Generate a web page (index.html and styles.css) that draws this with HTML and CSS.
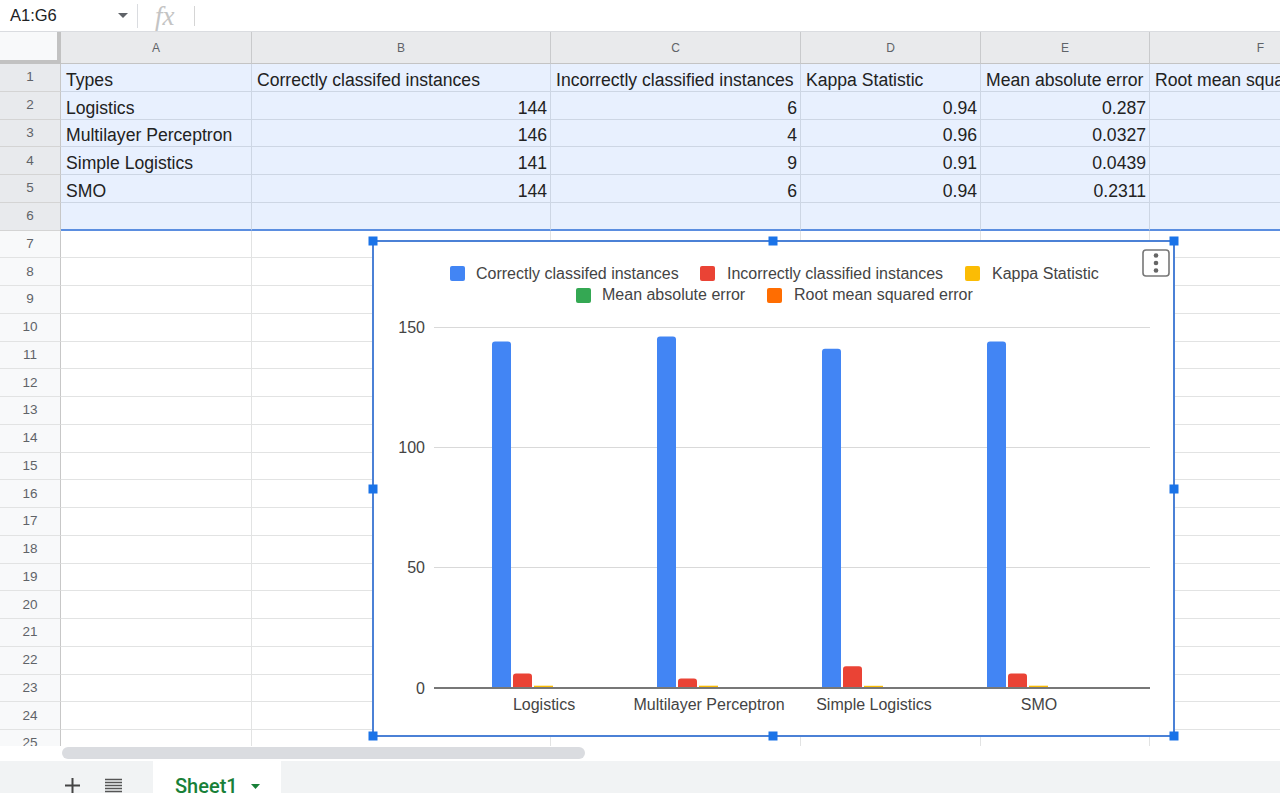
FILE: index.html
```html
<!DOCTYPE html>
<html>
<head>
<meta charset="utf-8">
<title>Sheet</title>
<link rel="stylesheet" href="styles.css">
</head>
<body>
<div class="app">
  <div class="fbar">
    <div class="namebox">
      <span class="nb-text">A1:G6</span>
      <svg class="nb-arrow" width="10" height="5" viewBox="0 0 10 5"><path d="M0 0h10L5 5z" fill="#5f6368"/></svg>
    </div>
    <div class="vsep"></div>
    <span class="fx">fx</span>
    <div class="vsep2"></div>
  </div>

  <div class="grid">
    <div class="row head">
      <div class="c rh corner"></div>
      <div class="c ch ca">A</div>
      <div class="c ch cb">B</div>
      <div class="c ch cc">C</div>
      <div class="c ch cd">D</div>
      <div class="c ch ce">E</div>
      <div class="c ch cf">F</div>
      <div class="c ch cg">G</div>
    </div>
    <div class="row sel">
      <div class="c rh">1</div>
      <div class="c ca">Types</div>
      <div class="c cb">Correctly classifed instances</div>
      <div class="c cc">Incorrectly classified instances</div>
      <div class="c cd">Kappa Statistic</div>
      <div class="c ce">Mean absolute error</div>
      <div class="c cf">Root mean squared error</div>
      <div class="c cg"></div>
    </div>
    <div class="row sel">
      <div class="c rh">2</div>
      <div class="c ca">Logistics</div>
      <div class="c cb num">144</div>
      <div class="c cc num">6</div>
      <div class="c cd num">0.94</div>
      <div class="c ce num">0.287</div>
      <div class="c cf"></div>
      <div class="c cg"></div>
    </div>
    <div class="row sel">
      <div class="c rh">3</div>
      <div class="c ca">Multilayer Perceptron</div>
      <div class="c cb num">146</div>
      <div class="c cc num">4</div>
      <div class="c cd num">0.96</div>
      <div class="c ce num">0.0327</div>
      <div class="c cf"></div>
      <div class="c cg"></div>
    </div>
    <div class="row sel">
      <div class="c rh">4</div>
      <div class="c ca">Simple Logistics</div>
      <div class="c cb num">141</div>
      <div class="c cc num">9</div>
      <div class="c cd num">0.91</div>
      <div class="c ce num">0.0439</div>
      <div class="c cf"></div>
      <div class="c cg"></div>
    </div>
    <div class="row sel">
      <div class="c rh">5</div>
      <div class="c ca">SMO</div>
      <div class="c cb num">144</div>
      <div class="c cc num">6</div>
      <div class="c cd num">0.94</div>
      <div class="c ce num">0.2311</div>
      <div class="c cf"></div>
      <div class="c cg"></div>
    </div>
    <div class="row sel sel-last">
      <div class="c rh">6</div>
      <div class="c ca"></div><div class="c cb"></div><div class="c cc"></div><div class="c cd"></div><div class="c ce"></div><div class="c cf"></div><div class="c cg"></div>
    </div>
    <div class="row"><div class="c rh">7</div><div class="c ca"></div><div class="c cb"></div><div class="c cc"></div><div class="c cd"></div><div class="c ce"></div><div class="c cf"></div><div class="c cg"></div></div>
    <div class="row"><div class="c rh">8</div><div class="c ca"></div><div class="c cb"></div><div class="c cc"></div><div class="c cd"></div><div class="c ce"></div><div class="c cf"></div><div class="c cg"></div></div>
    <div class="row"><div class="c rh">9</div><div class="c ca"></div><div class="c cb"></div><div class="c cc"></div><div class="c cd"></div><div class="c ce"></div><div class="c cf"></div><div class="c cg"></div></div>
    <div class="row"><div class="c rh">10</div><div class="c ca"></div><div class="c cb"></div><div class="c cc"></div><div class="c cd"></div><div class="c ce"></div><div class="c cf"></div><div class="c cg"></div></div>
    <div class="row"><div class="c rh">11</div><div class="c ca"></div><div class="c cb"></div><div class="c cc"></div><div class="c cd"></div><div class="c ce"></div><div class="c cf"></div><div class="c cg"></div></div>
    <div class="row"><div class="c rh">12</div><div class="c ca"></div><div class="c cb"></div><div class="c cc"></div><div class="c cd"></div><div class="c ce"></div><div class="c cf"></div><div class="c cg"></div></div>
    <div class="row"><div class="c rh">13</div><div class="c ca"></div><div class="c cb"></div><div class="c cc"></div><div class="c cd"></div><div class="c ce"></div><div class="c cf"></div><div class="c cg"></div></div>
    <div class="row"><div class="c rh">14</div><div class="c ca"></div><div class="c cb"></div><div class="c cc"></div><div class="c cd"></div><div class="c ce"></div><div class="c cf"></div><div class="c cg"></div></div>
    <div class="row"><div class="c rh">15</div><div class="c ca"></div><div class="c cb"></div><div class="c cc"></div><div class="c cd"></div><div class="c ce"></div><div class="c cf"></div><div class="c cg"></div></div>
    <div class="row"><div class="c rh">16</div><div class="c ca"></div><div class="c cb"></div><div class="c cc"></div><div class="c cd"></div><div class="c ce"></div><div class="c cf"></div><div class="c cg"></div></div>
    <div class="row"><div class="c rh">17</div><div class="c ca"></div><div class="c cb"></div><div class="c cc"></div><div class="c cd"></div><div class="c ce"></div><div class="c cf"></div><div class="c cg"></div></div>
    <div class="row"><div class="c rh">18</div><div class="c ca"></div><div class="c cb"></div><div class="c cc"></div><div class="c cd"></div><div class="c ce"></div><div class="c cf"></div><div class="c cg"></div></div>
    <div class="row"><div class="c rh">19</div><div class="c ca"></div><div class="c cb"></div><div class="c cc"></div><div class="c cd"></div><div class="c ce"></div><div class="c cf"></div><div class="c cg"></div></div>
    <div class="row"><div class="c rh">20</div><div class="c ca"></div><div class="c cb"></div><div class="c cc"></div><div class="c cd"></div><div class="c ce"></div><div class="c cf"></div><div class="c cg"></div></div>
    <div class="row"><div class="c rh">21</div><div class="c ca"></div><div class="c cb"></div><div class="c cc"></div><div class="c cd"></div><div class="c ce"></div><div class="c cf"></div><div class="c cg"></div></div>
    <div class="row"><div class="c rh">22</div><div class="c ca"></div><div class="c cb"></div><div class="c cc"></div><div class="c cd"></div><div class="c ce"></div><div class="c cf"></div><div class="c cg"></div></div>
    <div class="row"><div class="c rh">23</div><div class="c ca"></div><div class="c cb"></div><div class="c cc"></div><div class="c cd"></div><div class="c ce"></div><div class="c cf"></div><div class="c cg"></div></div>
    <div class="row"><div class="c rh">24</div><div class="c ca"></div><div class="c cb"></div><div class="c cc"></div><div class="c cd"></div><div class="c ce"></div><div class="c cf"></div><div class="c cg"></div></div>
    <div class="row"><div class="c rh">25</div><div class="c ca"></div><div class="c cb"></div><div class="c cc"></div><div class="c cd"></div><div class="c ce"></div><div class="c cf"></div><div class="c cg"></div></div>
  </div>

  <div class="hscroll"><div class="thumb"></div></div>

  <div class="tabs">
    <div class="tab-tools">
      <svg class="ico-plus" width="15" height="15" viewBox="0 0 15 15"><path d="M7.5 0v15M0 7.5h15" stroke="#444" stroke-width="2"/></svg>
      <svg class="ico-list" width="17" height="16" viewBox="0 0 17 16"><path d="M0 1.5h17M0 4.5h17M0 7.5h17M0 10.5h17M0 13.5h17" stroke="#555" stroke-width="1.6"/></svg>
    </div>
    <div class="tab">
      <span class="tab-name">Sheet1</span>
      <svg class="tab-arrow" width="9" height="5" viewBox="0 0 9 5"><path d="M0 0h9L4.5 5z" fill="#188038"/></svg>
    </div>
  </div>

  <div class="chart">
    <svg width="812" height="506" viewBox="368 236 812 506" font-family="Liberation Sans, Arial, sans-serif" font-size="16">
      <rect x="373" y="241" width="801" height="495" fill="#fff" stroke="#4b81d6" stroke-width="2"/>

      <!-- legend -->
      <rect x="450" y="266" width="15" height="15" rx="2" fill="#4285f4"/>
      <text x="476" y="279" fill="#444">Correctly classifed instances</text>
      <rect x="700" y="266" width="15" height="15" rx="2" fill="#ea4335"/>
      <text x="727" y="279" fill="#444">Incorrectly classified instances</text>
      <rect x="965" y="266" width="15" height="15" rx="2" fill="#fbbc04"/>
      <text x="992" y="279" fill="#444">Kappa Statistic</text>
      <rect x="576" y="288" width="15" height="15" rx="2" fill="#34a853"/>
      <text x="602" y="300" fill="#444">Mean absolute error</text>
      <rect x="767" y="288" width="15" height="15" rx="2" fill="#ff6d01"/>
      <text x="794" y="300" fill="#444">Root mean squared error</text>

      <!-- menu -->
      <rect x="1143" y="250" width="26" height="26" rx="3" fill="#fff" stroke="#777" stroke-width="1.6"/>
      <circle cx="1156" cy="255.5" r="2.3" fill="#666"/>
      <circle cx="1156" cy="263" r="2.3" fill="#666"/>
      <circle cx="1156" cy="270.5" r="2.3" fill="#666"/>

      <!-- gridlines -->
      <path d="M434 327.5H1150M434 447.5H1150M434 567.5H1150" stroke="#d9d9d9" stroke-width="1"/>

      <!-- y labels -->
      <g fill="#444" text-anchor="end">
        <text x="425" y="333">150</text>
        <text x="425" y="453">100</text>
        <text x="425" y="573">50</text>
        <text x="425" y="694">0</text>
      </g>

      <!-- bars -->
      <g fill="#4285f4">
        <path d="M492 688V344.4Q492 341.4 495 341.4H508Q511 341.4 511 344.4V688Z"/>
        <path d="M657 688V339.6Q657 336.6 660 336.6H673Q676 336.6 676 339.6V688Z"/>
        <path d="M822 688V351.7Q822 348.7 825 348.7H838Q841 348.7 841 351.7V688Z"/>
        <path d="M987 688V344.4Q987 341.4 990 341.4H1003Q1006 341.4 1006 344.4V688Z"/>
      </g>
      <g fill="#ea4335">
        <path d="M513 688V676.6Q513 673.6 516 673.6H529Q532 673.6 532 676.6V688Z"/>
        <path d="M678 688V681.4Q678 678.4 681 678.4H694Q697 678.4 697 681.4V688Z"/>
        <path d="M843 688V669.3Q843 666.3 846 666.3H859Q862 666.3 862 669.3V688Z"/>
        <path d="M1008 688V676.6Q1008 673.6 1011 673.6H1024Q1027 673.6 1027 676.6V688Z"/>
      </g>
      <g fill="#fbbc04">
        <rect x="534" y="685.7" width="19" height="2.3"/>
        <rect x="699" y="685.7" width="19" height="2.3"/>
        <rect x="864" y="685.8" width="19" height="2.2"/>
        <rect x="1029" y="685.7" width="19" height="2.3"/>
      </g>

      <!-- baseline -->
      <path d="M434 688H1150" stroke="#777" stroke-width="2"/>

      <!-- x labels -->
      <g fill="#444" text-anchor="middle">
        <text x="544" y="710">Logistics</text>
        <text x="709" y="710">Multilayer Perceptron</text>
        <text x="874" y="710">Simple Logistics</text>
        <text x="1039" y="710">SMO</text>
      </g>

      <!-- handles -->
      <g fill="#1a73e8">
        <rect x="368.5" y="236.5" width="9" height="9"/>
        <rect x="768.5" y="236.5" width="9" height="9"/>
        <rect x="1169.5" y="236.5" width="9" height="9"/>
        <rect x="368.5" y="484.5" width="9" height="9"/>
        <rect x="1169.5" y="484.5" width="9" height="9"/>
        <rect x="368.5" y="731.5" width="9" height="9"/>
        <rect x="768.5" y="731.5" width="9" height="9"/>
        <rect x="1169.5" y="731.5" width="9" height="9"/>
      </g>
    </svg>
  </div>
</div>
</body>
</html>
```

FILE: styles.css
```css
* { box-sizing: border-box; }
html, body { margin: 0; padding: 0; }
body {
  font-family: "Liberation Sans", Arial, sans-serif;
  background: #fff;
  width: 1280px;
  height: 793px;
  overflow: hidden;
}
.app {
  position: relative;
  width: 1280px;
  height: 793px;
  overflow: hidden;
  display: flex;
  flex-direction: column;
}

/* formula bar */
.fbar {
  flex: none;
  height: 32px;
  display: flex;
  align-items: center;
  border-bottom: 1px solid #dadce0;
  background: #fff;
}
.namebox {
  width: 137px;
  height: 100%;
  display: flex;
  align-items: center;
  padding-left: 10px;
}
.nb-text {
  flex: 1;
  font-size: 16.5px;
  color: #202124;
}
.nb-arrow { margin-right: 9px; }
.vsep { width: 1px; height: 24px; background: #dadce0; }
.fx {
  font-family: "Liberation Serif", serif;
  font-style: italic;
  font-size: 27px;
  line-height: 26px;
  color: #c4c4c4;
  margin-left: 17px;
  width: 39px;
}
.vsep2 { width: 1px; height: 20px; background: #d5d5d5; }

/* grid */
.grid {
  flex: none;
  height: 714px;
  overflow: hidden;
}
.row {
  display: flex;
  height: 27.75px;
}
.row.head { height: 32px; }
.c {
  flex: none;
  height: 100%;
  border-right: 1px solid #e2e3e3;
  border-bottom: 1px solid #e2e3e3;
  display: flex;
  align-items: flex-end;
  padding: 0 3px 1px 5px;
  line-height: 20px;
  white-space: nowrap;
  overflow: hidden;
  font-size: 17.6px;
  color: #222;
}
.num { justify-content: flex-end; }
.rh {
  width: 61px;
  align-items: center;
  justify-content: center;
  padding: 0;
  font-size: 13.5px;
  color: #5f6368;
  background: #f8f9fa;
  border-right-color: #c7c7c7;
}
.ca { width: 191px; }
.cb { width: 299px; }
.cc { width: 250px; }
.cd { width: 180px; }
.ce { width: 169px; }
.cf { width: 222px; overflow: visible; }
.cg { width: 220px; }

.ch {
  align-items: center;
  justify-content: center;
  padding: 0;
  font-size: 12px;
  color: #5f6368;
  background: #e9eaec;
  border-right-color: #c9cacc;
  border-bottom-color: #c4c4c4;
}
.corner {
  background: #f8f9fa;
  border-right: 4px solid #c2c2c2;
  border-bottom: 4px solid #c2c2c2;
}

.sel .c { background: #e8f0fe; border-color: #cdd6e4; }
.sel .rh { background: #e8eaed; border-right-color: #c7c7c7; border-bottom-color: #d4d4d4; }
.sel-last .c { border-bottom: 2px solid #5b8ee0; }
.sel-last .rh { border-bottom: 1px solid #d4d4d4; }

/* horizontal scroll */
.hscroll {
  flex: none;
  height: 15px;
  background: #fff;
  padding: 1px 0 0 62px;
}
.thumb {
  width: 523px;
  height: 12px;
  border-radius: 6px;
  background: #dadce0;
}

/* sheet tabs */
.tabs {
  flex: none;
  height: 32px;
  background: #f1f3f4;
  display: flex;
  align-items: flex-start;
  overflow: hidden;
}
.tab-tools {
  width: 153px;
  height: 100%;
  display: flex;
  align-items: flex-start;
  padding: 17px 0 0 65px;
  gap: 25px;
}
.tab {
  width: 128px;
  height: 40px;
  background: #fff;
  display: flex;
  align-items: flex-start;
  padding: 15px 0 0 22px;
}
.tab-name {
  font-family: Roboto, "Liberation Sans", sans-serif;
  font-weight: 500;
  font-size: 20px;
  line-height: 20px;
  color: #188038;
}
.tab-arrow { margin: 8px 0 0 13px; }

/* chart overlay */
.chart {
  position: absolute;
  left: 368px;
  top: 236px;
  width: 812px;
  height: 506px;
}
.chart svg { display: block; }
```
